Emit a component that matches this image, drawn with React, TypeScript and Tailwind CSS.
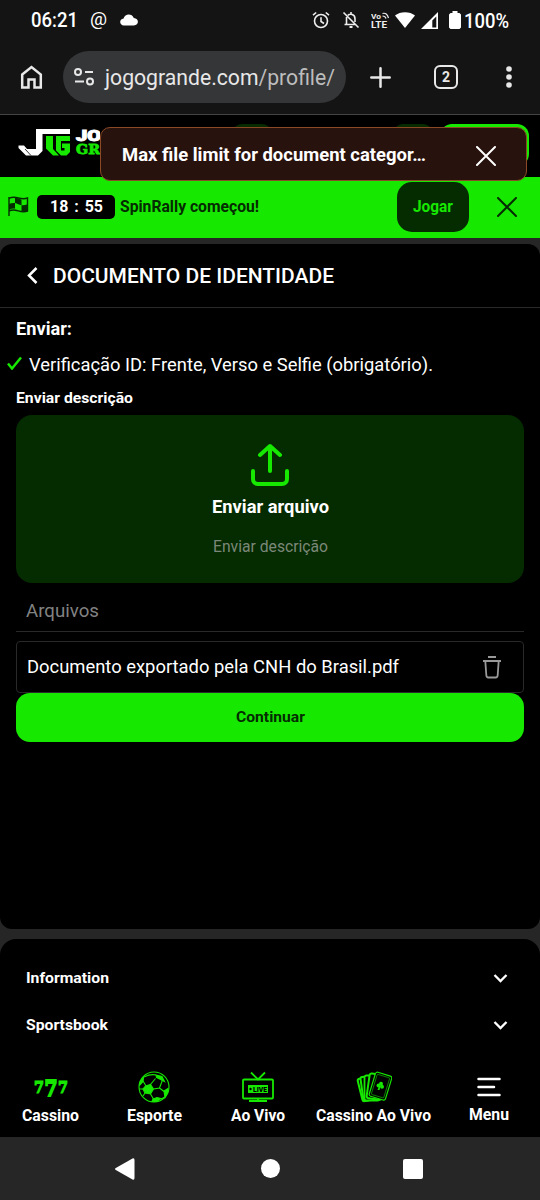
import React from "react";

const G = "#17e800";

function Txt({ children, w, className = "", weight = "" }: { children: React.ReactNode; w: number; className?: string; weight?: string }) {
  return (
    <svg width={w} height="26" className={"block shrink-0 overflow-visible " + className}>
      <text x="0" y="19" textLength={w} lengthAdjust="spacingAndGlyphs" fill="currentColor" className={weight}>
        {children}
      </text>
    </svg>
  );
}

function StatusBar() {
  return (
    <div className="flex h-[40px] items-center pl-[31px] text-white">
      <Txt w={47} className="mt-[2px] mr-[12px] text-[19.500px]" weight="font-medium">06:21</Txt>
      <span className="mb-[4px] w-[30px] text-[19px] leading-none">@</span>
      <svg width="18" height="12" viewBox="0 0 18 12" fill="#fff"><path d="M4 11.5C-1 11-1 5 3.6 4.5 5-.6 12-.6 13.8 4c5.5.3 5.500 7.500 0 7.500z" /></svg>
      <svg className="ml-[174px]" width="18" height="18" viewBox="0 0 18 18" fill="none" stroke="#eee" strokeWidth="1.6"><circle cx="9" cy="10" r="6.500" /><path d="M9 6.200V10.500l3 2M1 4.200l3.200-2.700M17 4.200l-3.200-2.700" /></svg>
      <svg className="ml-[12px]" width="18" height="18" viewBox="0 0 18 18" fill="none" stroke="#eee" strokeWidth="1.6"><path d="M1.500 1.500l15 15M4.500 6v7M2.500 13.500h11M5.800 4.300C8 2.500 13 3 13 8v3M9 1v2" /><path d="M7.500 16h3" strokeWidth="2" /></svg>
      <svg className="ml-[11px]" width="20" height="18" viewBox="0 0 20 18" fill="none" stroke="#eee" strokeWidth="1.200">
        <text x="0" y="8" textLength="10" lengthAdjust="spacingAndGlyphs" fill="#eee" stroke="none" className="text-[8px] font-bold">Vo</text>
        <text x="0" y="17" textLength="16" lengthAdjust="spacingAndGlyphs" fill="#eee" stroke="none" className="text-[9px] font-bold">LTE</text>
        <path d="M11.500 2.500c3-1 5 1 6 4.500M11.500 5c1.500 0 3 .5 3.500 2.500" />
      </svg>
      <svg className="ml-[4px]" width="20" height="16" viewBox="0 0 20 16" fill="#fff"><path d="M0 3.500C5-1 15-1 20 3.500L10 16z" /></svg>
      <svg className="ml-[6px]" width="17" height="17" viewBox="0 0 17 17" fill="#fff"><path fillRule="evenodd" d="M17 0v17H0zM15.300 4.500l-4 4v7h4z" /></svg>
      <svg className="ml-[11px]" width="12" height="18" viewBox="0 0 12 18" fill="#fff"><path d="M3.500 2V0h5v2H10.500L12 3.500v13L10.500 18h-9L0 16.500v-13L1.500 2z" /></svg>
      <Txt w={45} className="mt-[3px] ml-[3px] text-[19.500px]" weight="font-medium">100%</Txt>
    </div>
  );
}

function BrowserBar() {
  return (
    <div className="flex h-[74px] items-center pl-[20px] text-[#e8e8e8]">
      <svg width="23" height="24" viewBox="0 0 23 24" fill="none" stroke="currentColor" strokeWidth="2.500"><path d="M2.200 9.500L11.500 2l9.300 7.500v13h-6.300v-8h-6v8H2.200z" /></svg>
      <div className="ml-[20px] flex h-[52px] w-[283px] items-center rounded-full bg-[#353638] pl-[11px]">
        <svg width="20" height="18" viewBox="0 0 20 18" fill="none" stroke="currentColor" strokeWidth="2"><circle cx="4" cy="4" r="3" /><path d="M11 4h8M1 13.500h9" /><circle cx="16" cy="13.500" r="3" /></svg>
        <Txt w={230} className="mt-[4px] ml-[11px] text-[21.500px]">jogogrande.com<tspan fill="#bdbdbd">/profile/</tspan></Txt>
      </div>
      <svg className="ml-[24px]" width="21" height="21" viewBox="0 0 21 21" stroke="currentColor" strokeWidth="2.500" strokeLinecap="round"><path d="M10.500 1.300v18.400M1.300 10.500h18.400" /></svg>
      <div className="ml-[43px] flex h-[24px] w-[24px] items-center justify-center rounded-[6px] border-[2.500px] border-[#e8e8e8] text-[14px] font-bold">2</div>
      <svg className="ml-[48px]" width="6" height="22" viewBox="0 0 6 22" fill="currentColor"><circle cx="3" cy="3" r="2.800" /><circle cx="3" cy="11" r="2.800" /><circle cx="3" cy="19" r="2.800" /></svg>
    </div>
  );
}

function Close({ size, color }: { size: number; color: string }) {
  return <svg width={size} height={size} viewBox="0 0 20 20" stroke={color} strokeWidth="2" strokeLinecap="round"><path d="M1 1l18 18M19 1L1 19" /></svg>;
}

function Header() {
  return (
    <div className="relative flex h-[63px] border-t border-[#444] bg-black pt-[14px] pl-[18px]">
      <svg width="53" height="28" viewBox="0 0 53 28">
        <path fill="#fff" d="M18 0H52V5H24.500V22L20 26.500H8L.500 19V16.500H6L9 20H18z" />
        <path d="M7 20l6 6.500" stroke="#000" strokeWidth=".8" />
        <path fill={G} d="M28 7h7v13l6 6.500h-6l-7-7zM38 7H52V12H43V21.500H46.500V19H44V14.500H52V23L48.500 26.500H43L38 21.500z" />
      </svg>
      <svg className="ml-[4px]" width="25" height="28" viewBox="0 0 25 28">
        <text x="1" y="11.500" textLength="25" lengthAdjust="spacingAndGlyphs" fill="#fff" stroke="#fff" strokeWidth="1" className="text-[14px] font-black">JO</text>
        <text x="1" y="25" textLength="24" lengthAdjust="spacingAndGlyphs" fill={G} stroke={G} strokeWidth=".8" className="font-['DejaVu_Serif'] text-[13px] font-bold">GR</text>
      </svg>
      <div className="absolute top-[9px] left-[232px] h-[40px] w-[40px] rounded-[10px] bg-[#062b00]" />
      <div className="absolute top-[9px] left-[393px] h-[40px] w-[40px] rounded-[10px] bg-[#062b00]" />
      <div className="absolute top-[9px] left-[440px] h-[42px] w-[89px] rounded-[12px] bg-[#17e800]" />
      <div className="absolute top-[12px] left-[100px] z-10 flex h-[54px] w-[427px] items-center rounded-[10px] border border-[#8b4a25] bg-[#28120d] pl-[21px] text-white">
        <Txt w={304} className="mt-px text-[18.500px]" weight="font-bold">Max file limit for document categor…</Txt>
        <span className="mt-[4px] ml-[50px]"><Close size={20} color="#fff" /></span>
      </div>
    </div>
  );
}

function Rally() {
  return (
    <div className="flex h-[61px] items-center bg-[#17e800] pb-[2px] pl-[8px] text-[#052b00]">
      <svg width="21" height="21" viewBox="0 0 21 21" fill="none" stroke="currentColor" strokeWidth="1.400"><path d="M1 1v19M1 2.500C8-1.500 12 5 19.500 2v13c-7.500 3-11.500-3.500-18.500 0" /><path fill="currentColor" stroke="none" d="M7 1.500c2.500.3 4.500 1.800 6.500 2.100v5.600C11 9 9.500 7.500 7 7zM1 8c2-1 4-1.300 6-1v5.700c-2-.3-4 0-6 1zM13.500 9.200c2 .2 4-.1 6-.9V15c-2 .8-4 1-6 .700z" /></svg>
      <div className="ml-[8px] flex h-[24px] w-[78px] items-center justify-center rounded-[5px] bg-black text-white"><Txt w={53} className="-mt-[2px] text-[16px] [word-spacing:2px]" weight="font-bold">18 : 55</Txt></div>
      <Txt w={139} className="-mt-[2px] ml-[5px] text-[16px]" weight="font-bold">SpinRally começou!</Txt>
      <div className="ml-[138px] flex h-[50px] w-[72px] items-center justify-center rounded-[15px] bg-[#052b00] text-[#17e800]"><Txt w={40} className="-mt-[2px] text-[16px]" weight="font-bold">Jogar</Txt></div>
      <span className="ml-[28px]"><Close size={20} color="#052b00" /></span>
    </div>
  );
}

function Document() {
  return (
    <main className="mt-[6px] h-[685px] rounded-[12px] bg-black text-white">
      <div className="flex h-[64px] items-center border-b border-[#292929] pl-[27px]">
        <svg width="11" height="17" viewBox="0 0 11 17" fill="none" stroke="#fff" strokeWidth="2.500"><path d="M9.500 1L2 8.500 9.500 16" /></svg>
        <Txt w={281} className="mt-[2px] ml-[15px] text-[20.500px]" weight="font-medium">DOCUMENTO DE IDENTIDADE</Txt>
      </div>
      <div className="px-[16px]">
        <Txt w={56} className="mt-[8px] text-[18px]" weight="font-bold">Enviar:</Txt>
        <div className="-ml-[9px] mt-[10px] flex items-center">
          <svg className="-mt-[4px]" width="15" height="14" viewBox="0 0 15 14" fill="none" stroke={G} strokeWidth="2.500"><path d="M1 7.500l4 5L14 1.500" /></svg>
          <Txt w={404} className="ml-[7px] text-[18.500px]">Verificação ID: Frente, Verso e Selfie (obrigatório).</Txt>
        </div>
        <Txt w={117} className="mt-[6px] text-[15.500px]" weight="font-bold">Enviar descrição</Txt>
        <div className="mt-[5px] flex h-[168px] flex-col items-center rounded-[16px] bg-[#052b00] pt-[28px]">
          <svg width="40" height="44" viewBox="0 0 40 44" fill="none" stroke={G} strokeWidth="4" strokeLinecap="round" strokeLinejoin="round"><path d="M20 28V3M10 12L20 3l10 9M3 28v8c0 3 2 5 5 5h24c3 0 5-2 5-5v-8" /></svg>
          <Txt w={117} className="mt-[7px] text-[18px]" weight="font-bold">Enviar arquivo</Txt>
          <Txt w={115} className="mt-[13px] text-[16px] text-[#7b8879]">Enviar descrição</Txt>
        </div>
        <div className="flex h-[49px] items-center border-b border-[#292929] pt-[7px] pl-[10px] text-[#828282]"><Txt w={73} className="text-[18px]">Arquivos</Txt></div>
        <div className="mt-[9px] flex h-[52px] items-center rounded-[4px] border border-[#292929] pl-[10px]">
          <Txt w={372} className="text-[18.500px]">Documento exportado pela CNH do Brasil.pdf</Txt>
          <svg className="ml-[83px]" width="20" height="24" viewBox="0 0 20 24" fill="none" stroke="#999" strokeWidth="1.800"><path d="M6 2h8M1 6h18M3.300 6l1 14c.1 2 1 2.500 2 2.500h7.400c1 0 1.900-.5 2-2.500l1-14" /></svg>
        </div>
        <button className="flex h-[49px] w-full items-center justify-center rounded-[14px] bg-[#17e800] text-[#052b00]"><Txt w={69} className="-mt-[3px] text-[15.500px]" weight="font-bold">Continuar</Txt></button>
      </div>
    </main>
  );
}

function Row({ label, w }: { label: string; w: number }) {
  return <div className="flex h-[47px] items-center justify-between pr-[32px] pl-[26px]"><Txt w={w} className="-mt-[2px] text-[15.500px]" weight="font-bold">{label}</Txt><svg width="15" height="10" viewBox="0 0 15 10" fill="none" stroke="#fff" strokeWidth="2.300"><path d="M1.500 2l6 6 6-6" /></svg></div>;
}

function Sevens() {
  return (
    <svg width="36" height="34" viewBox="0 0 36 34" className="font-['DejaVu_Serif'] font-bold" fill={G} stroke={G}>
      <text x="1" y="23" textLength="10" lengthAdjust="spacingAndGlyphs" strokeWidth="1.200" className="text-[17px]">7</text>
      <text x="25" y="23" textLength="10" lengthAdjust="spacingAndGlyphs" strokeWidth="1.200" className="text-[17px]">7</text>
      <text x="11.500" y="25.500" textLength="13" lengthAdjust="spacingAndGlyphs" strokeWidth="1.800" className="text-[23px]">7</text>
    </svg>
  );
}

function Ball() {
  return <svg width="32" height="32" viewBox="0 0 32 32" fill="none" stroke={G} strokeWidth="1.100"><circle cx="16" cy="16" r="15" /><path fill={G} d="M7.500 15l5-1.500L15.500 18l-3 5-5.500-1-2-4zM18 4l6 1.500 2.500 5-3-1.500-5-2.500zM15 28l4-1.500 4 1-4 3h-5zM26 20l4-2.500v3l-3 6zM2.500 10l3-3.500-.5 4-3.500 4z" /><path d="M12.500 13.500l5-6M5 10l3 5M15.500 18l6-1 3-8M21.500 17l4.500 3.500M12.500 23l3 5M7 22l-2 3M5 18H1M6 6c4-2 8-3 12-2M23 28l4-2" /></svg>;
}

function LiveTv() {
  return (
    <svg width="32" height="32" viewBox="0 0 32 32" fill="none" stroke={G} strokeWidth="1.800">
      <rect x="1" y="8.500" width="30" height="19" rx="1" /><path d="M9 1.500l7 7 7-7M16 28v3M7 30h18" />
      <path fill={G} stroke="none" d="M6 14h20v8H6z" /><circle cx="8.500" cy="18" r="1.200" fill="#000" stroke="none" />
      <text x="11" y="20.500" textLength="14" lengthAdjust="spacingAndGlyphs" fill="#000" stroke="none" className="text-[7px] font-black">LIVE</text>
    </svg>
  );
}

function Cards() {
  return <svg width="36" height="32" viewBox="0 0 36 32" fill="#000" stroke={G} strokeWidth="1.200"><g><rect x="4" y="6" width="15" height="23" rx="2" transform="rotate(-14 12 18)" strokeWidth="2" /><rect x="6" y="5" width="15" height="24" rx="2" transform="rotate(-8 14 18)" strokeWidth="2" /><rect x="8.500" y="4.500" width="15" height="25" rx="2" strokeWidth="1.800" /><rect x="12" y="3" width="15" height="25" rx="2" transform="rotate(8 19 16)" strokeWidth="2" /><rect x="16" y="2.500" width="17" height="25" rx="2" transform="rotate(17 24 15)" /><rect x="18" y="4.500" width="13" height="21" rx="1" transform="rotate(17 24 15)" strokeWidth=".5" /></g><g fill={G} stroke="none"><circle cx="22.500" cy="14.500" r="2" /><circle cx="25" cy="12.800" r="2" /><circle cx="26" cy="15.700" r="2" /><path d="M23.500 14l1 1-1 4h-2z" /></g></svg>;
}

function NavItem({ icon, label, w, cell }: { icon: React.ReactNode; label: string; w: number; cell: string }) {
  return <div className={"flex flex-col items-center " + cell}><div className="flex h-[34px] items-center">{icon}</div><Txt w={w} className="-mt-[2px] text-[16px]" weight="font-bold">{label}</Txt></div>;
}

function BottomNav() {
  return (
    <nav className="flex pt-[22px]">
      <NavItem cell="w-[101px]" w={57} label="Cassino" icon={<Sevens />} />
      <NavItem cell="w-[106px]" w={55} label="Esporte" icon={<Ball />} />
      <NavItem cell="w-[101px]" w={54} label="Ao Vivo" icon={<LiveTv />} />
      <NavItem cell="w-[131px]" w={115} label="Cassino Ao Vivo" icon={<Cards />} />
      <NavItem cell="w-[100px] -mt-[1px]" w={40} label="Menu" icon={<svg className="mt-[2px]" width="24" height="20" viewBox="0 0 24 20" stroke="#fff" strokeWidth="2.500" strokeLinecap="round"><path d="M1.500 2h21M1.500 10h15.500M1.500 18h21" /></svg>} />
    </nav>
  );
}

export default function App() {
  return (
    <div className="flex h-[1200px] w-[540px] flex-col overflow-hidden bg-[#262626] font-['Roboto',sans-serif]">
      <div className="h-[114px] bg-[#141414]"><StatusBar /><BrowserBar /></div>
      <Header />
      <Rally />
      <Document />
      <footer className="mt-[10px] h-[198px] rounded-t-[16px] bg-black pt-[15px] text-white">
        <Row label="Information" w={83} />
        <Row label="Sportsbook" w={82} />
        <BottomNav />
      </footer>
      <div className="flex h-[63px] items-center pl-[115px]">
        <svg width="20" height="22" viewBox="0 0 20 22" fill="#fff"><path d="M17.500.4Q19.500-.4 19.500 2v18q0 2.400-2 1.600L.8 12q-1.600-1 0-2z" /></svg>
        <div className="ml-[126px] h-[19px] w-[19px] rounded-full bg-white" />
        <div className="ml-[123px] h-[20px] w-[20px] rounded-[2px] bg-white" />
      </div>
    </div>
  );
}
